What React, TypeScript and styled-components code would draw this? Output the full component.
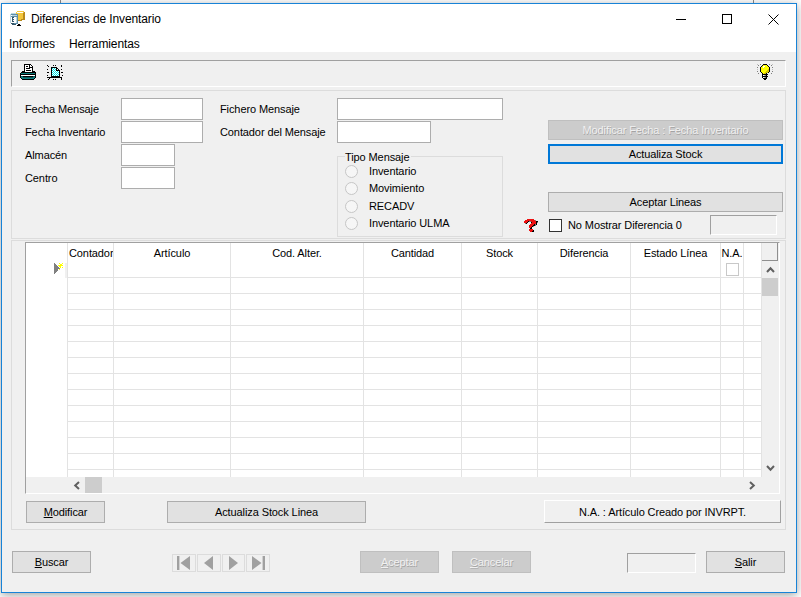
import { createGlobalStyle, styled } from 'styled-components';

const GlobalStyle = createGlobalStyle`
  html, body {
    margin: 0;
    padding: 0;
    height: 100%;
    overflow: hidden;
    background: #ffffff;
  }
  * {
    box-sizing: border-box;
  }
  body {
    font-family: 'Liberation Sans', Arial, sans-serif;
    font-size: 11px;
    letter-spacing: -0.1px;
    color: #000000;
  }
`;

const Backdrop = styled.div`
  width: 801px;
  height: 597px;
  padding: 3px 0 0 1px;
  background-image: linear-gradient(#8c8c8c, #8c8c8c), linear-gradient(#8c8c8c, #8c8c8c);
  background-size: 1px 3px;
  background-position: 60px 0, 753px 0;
  background-repeat: no-repeat;
`;

const Window = styled.div`
  width: 796px;
  height: 590px;
  display: flex;
  flex-direction: column;
  background: #f0f0f0;
  border: 1px solid #1883d7;
  box-shadow: 0 2px 9px rgba(0, 0, 0, 0.38);
`;

const TitleBar = styled.div`
  height: 30px;
  flex: none;
  display: flex;
  align-items: center;
  padding-left: 8px;
  background: #ffffff;
`;

const Title = styled.span`
  margin-left: 5px;
  flex: 1;
  font-size: 12px;
  letter-spacing: -0.12px;
`;

const WindowButton = styled.div`
  width: 46px;
  height: 30px;
  display: flex;
  align-items: center;
  justify-content: center;
`;

const MenuBar = styled.div`
  height: 18px;
  flex: none;
  display: flex;
  gap: 14px;
  align-items: center;
  padding: 2px 0 0 7px;
  font-size: 12px;
  background: #ffffff;
`;

const Content = styled.div`
  flex: 1;
  display: flex;
  flex-direction: column;
  padding: 8px 10px 0 9px;
`;

const Toolbar = styled.div`
  height: 27px;
  flex: none;
  display: flex;
  align-items: center;
  gap: 11px;
  padding: 0 12px 3px 8px;
  border-top: 1px solid #a0a0a0;
  border-left: 1px solid #a0a0a0;
  border-bottom: 1px solid #ffffff;
  border-right: 1px solid #ffffff;
`;

const ToolbarEnd = styled.div`
  margin-left: auto;
  display: flex;
`;

const FormPanel = styled.div`
  height: 149px;
  flex: none;
  margin-top: 3px;
  display: flex;
  padding: 7px 0 0 13px;
  border: 1px solid #dcdcdc;
`;

const FieldColumn = styled.div<{ $width: number }>`
  width: ${(p) => p.$width}px;
  flex: none;
  display: flex;
  flex-direction: column;
  gap: 1px;
`;

const Field = styled.div`
  height: 22px;
  flex: none;
  display: flex;
  align-items: center;
`;

const FieldLabel = styled.label<{ $width: number }>`
  width: ${(p) => p.$width}px;
  flex: none;
`;

const TextBox = styled.div<{ $width: number }>`
  width: ${(p) => p.$width}px;
  height: 22px;
  background: #ffffff;
  border: 1px solid #adadad;
`;

const TipoMensaje = styled.fieldset`
  width: 166px;
  height: 88px;
  margin: 5px 0 0 117px;
  padding: 0 0 0 7px;
  border: 1px solid #dcdcdc;
`;

const Legend = styled.legend`
  padding: 2px 2px 0 0;
  margin-bottom: -1.5px;
  line-height: 13px;
`;

const RadioRow = styled.div`
  height: 17.3px;
  display: flex;
  align-items: center;
  gap: 11px;
`;

const Radio = styled.span`
  width: 13px;
  height: 13px;
  margin-top: 1px;
  border: 1px solid #c6c6c6;
  border-radius: 50%;
  background: #f6f6f6;
`;

const ActionColumn = styled.div`
  width: 259px;
  flex: none;
  display: flex;
  flex-direction: column;
  padding: 22px 0 0 24px;
`;

const Button = styled.div<{ $width?: number; $height?: number; $top?: number }>`
  width: ${(p) => (p.$width ? `${p.$width}px` : '100%')};
  height: ${(p) => p.$height ?? 22}px;
  margin-top: ${(p) => p.$top ?? 0}px;
  flex: none;
  display: flex;
  align-items: center;
  justify-content: center;
  background: #e1e1e1;
  border: 1px solid #adadad;
`;

const FocusButton = styled(Button)`
  border: 2px solid #0078d7;
`;

const DisabledButton = styled(Button)`
  background: #cccccc;
  border-color: #bfbfbf;
  color: #f1f1f1;
  text-shadow: 0.6px 0.6px 0 #a3a3a3;
`;

const RaisedButton = styled(Button)`
  background: #f0f0f0;
  border-color: #ffffff #a0a0a0 #a0a0a0 #ffffff;
`;

const CheckRow = styled.div`
  height: 20px;
  margin: 3px 6px 0 -24px;
  display: flex;
  align-items: center;
`;

const Checkbox = styled.span`
  width: 13px;
  height: 13px;
  margin: 1px 6px 0 10px;
  background: #ffffff;
  border: 1px solid #333333;
`;

const Readout = styled.div<{ $width: number }>`
  width: ${(p) => p.$width}px;
  height: 20px;
  flex: none;
  border-top: 1px solid #a0a0a0;
  border-left: 1px solid #a0a0a0;
  border-bottom: 1px solid #ffffff;
  border-right: 1px solid #ffffff;
`;

const GridPanel = styled.div`
  height: 290px;
  flex: none;
  margin-top: 1px;
  padding: 1px 0 0 13px;
  border: 1px solid #dcdcdc;
`;

const GridBox = styled.div`
  width: 755px;
  height: 252px;
  display: grid;
  grid-template-columns: 736px 1fr;
  grid-template-rows: 234px 1fr;
  border-top: 1px solid #a0a0a0;
  border-left: 1px solid #a0a0a0;
  border-bottom: 1px solid #ffffff;
  border-right: 1px solid #ffffff;
`;

const Table = styled.div`
  overflow: hidden;
  display: grid;
  grid-template-columns: 42px 46px 117px 133px 98px 76px 93px 90px 23px 18px;
  grid-auto-rows: 16px;
  grid-template-rows: 35px;
  background: #ffffff;
`;

const Corner = styled.div`
  display: flex;
  align-items: flex-end;
  justify-content: flex-end;
  border-right: 1px solid #e3e3e3;
`;

const RowMark = styled.div`
  height: 15px;
  display: flex;
  align-items: flex-start;
  padding-right: 2px;
  border-right: 2px solid #f0f0f0;
`;

const RowHead = styled.div`
  border-right: 1px solid #e3e3e3;
`;

const HeadCell = styled.div<{ $left?: boolean }>`
  display: flex;
  flex-direction: column;
  align-items: ${(p) => (p.$left ? 'flex-start' : 'center')};
  padding: 3px 0 0 ${(p) => (p.$left ? 1 : 0)}px;
  white-space: nowrap;
  overflow: hidden;
  line-height: 14px;
  border-right: 1px solid #e3e3e3;
  border-bottom: 1px solid #e3e3e3;
`;

const HeadCheck = styled.span`
  width: 13px;
  height: 13px;
  margin-top: 3px;
  background: #ffffff;
  border: 1px solid #c8c8c8;
`;

const Cell = styled.div`
  border-right: 1px solid #e3e3e3;
  border-bottom: 1px solid #e3e3e3;
`;

const VScroll = styled.div`
  width: 16px;
  display: flex;
  flex-direction: column;
  background: #f0f0f0;
`;

const ScrollCorner = styled.div`
  height: 18px;
  flex: none;
  border-right: 1px solid #8f8f8f;
  border-bottom: 1px solid #8f8f8f;
`;

const ArrowButton = styled.div`
  width: 16px;
  height: 17px;
  flex: none;
  display: flex;
  align-items: center;
  justify-content: center;
`;

const VThumb = styled.div`
  height: 18px;
  flex: none;
  background: #cdcdcd;
`;

const Spring = styled.div`
  flex: 1;
`;

const HScroll = styled.div`
  grid-column: 1 / 3;
  height: 16px;
  display: flex;
  padding: 0 18px 0 42px;
  background: #f0f0f0;
`;

const HThumb = styled.div`
  width: 17px;
  flex: none;
  background: #cdcdcd;
`;

const HArrow = styled(ArrowButton)`
  height: 16px;
  width: 17px;
`;

const GridActions = styled.div`
  display: flex;
  margin-top: 7px;
  padding-left: 1px;
`;

const Footer = styled.div`
  display: flex;
  align-items: flex-end;
  height: 23px;
  margin-top: 20px;
  padding-left: 1px;
`;

const Pager = styled.div`
  width: 98px;
  height: 18px;
  flex: none;
  margin: 0 0 1px 81px;
  display: grid;
  grid-template-columns: repeat(4, 1fr);
  gap: 1px;
`;

const PagerButton = styled.div`
  display: flex;
  align-items: center;
  justify-content: center;
  border: 1px solid #dcdcdc;
`;

const Mnemonic = styled.span`
  text-decoration: underline;
`;

const Spacer = styled.div<{ $width: number }>`
  width: ${(p) => p.$width}px;
  flex: none;
`;

type Palette = Record<string, string>;

const COLORS: Palette = {
  k: '#000000',
  w: '#ffffff',
  t: '#0f7f7f',
  d: '#075a5a',
  g: '#808080',
  s: '#c0c0c0',
  y: '#ffff00',
  o: '#d6c400',
  c: '#00e5e5',
  r: '#ee1111',
  m: '#8a0000',
  f: '#f3c63c',
  h: '#b98a1c',
  b: '#5f8fa8',
  l: '#b9d6e2',
  n: '#34566b',
};

// small bitmap icons, one char per pixel
function PixelIcon({ rows }: { rows: string[] }) {
  const width = rows[0].length;
  return (
    <svg width={width} height={rows.length} viewBox={`0 0 ${width} ${rows.length}`} shapeRendering="crispEdges">
      {rows.map((row, y) =>
        row.split('').map((ch, x) =>
          COLORS[ch] ? <rect key={`${x}-${y}`} x={x} y={y} width={1} height={1} fill={COLORS[ch]} /> : null,
        ),
      )}
    </svg>
  );
}

const APP_ICON = [
  '.......fffffff..',
  '......fwwwwwwfh.',
  '.lllllfffffffhh.',
  'lbbbbbbbfffffhh.',
  'lwlllllbfffffhh.',
  'lbbbbbbbfffffhh.',
  'lwnnwwlbfffffhh.',
  'lwnwwwlbfffffhh.',
  'lwnnwwlbfffhhhh.',
  'lwnwwwlbhhhh....',
  'lwnnwwlb........',
  'lwwwwwlb........',
  '.nnnbbbb........',
  '..nnnn..kk......',
  '.......kkkk.....',
  '................',
];

const PRINTER_ICON = [
  '....kkkkkkk.....',
  '....kwwwwkwk....',
  '....kwkkwkwwk...',
  '....kwwwwkkkk...',
  '....kwkkkkwwk...',
  '....kwwwwwwwk...',
  '....kwkkkkkwk...',
  '..kkkwwwwwwwkkk.',
  '.kkkkkkkkkkkkkkk',
  'kttttttttttttttk',
  'kkkkkkkkkkkkkkkk',
  'kwwwwwwwwwwwwwwk',
  'kddkkkkkkkkkkddk',
  'kttddddddddddttk',
  '.kttttttttttttk.',
  '..kkkkkkkkkkkk..',
];

const PAGE_ICON = [
  'k.....k.k.....k.',
  '.k............k.',
  '....kkkkkk......',
  '....kcwcwkk.....',
  'k...kwcwckwk..k.',
  '....kcwcwkkkk...',
  '....kwcwcwcwk...',
  'kk..kcwcwcwck.kk',
  '....kwcwcwcwk...',
  '....kcwcwcwck...',
  'k...kwcwcwcwk..k',
  '....kkkkkkkkk...',
  'kkkkkkkkkkkkkkk.',
  '..k...........k.',
  '.k....k.k.....k.',
];

const BULB_ICON = [
  's..g..kkkk..g..s',
  '.g...kyyyyk...g.',
  '....kywwyyyk....',
  'g..kyywyyyyyk..g',
  '...kyyyyyyyyk...',
  's..kyyyyyyyok..s',
  '...kyyyyyyook...',
  'g..kyyyyyoook..g',
  '....kyyyoook....',
  '.g...kyook....g.',
  '.....kkkkkk.....',
  '.....kwsgk......',
  '.....kkkkkk.....',
  '.....kwsgk......',
  '......kkkk......',
  '.......kk.......',
];

const HELP_ICON = [
  '...rrrrrrr.....',
  '.rrrrrrrrrrg...',
  'rrrrkggrrrrrkk.',
  'rrrk...krrrrkg.',
  '.gk....rrrrrk..',
  '......rrrrkgk..',
  '.....rrrrkkg...',
  '.....rrrkg.....',
  '.....rrk.......',
  '......kk.......',
  '.....rrrr......',
  '.....rrrrk.....',
  '......rrkk.....',
];

const MARKER_ICON = [
  'g....y..y',
  'gg....yy.',
  'ggg.yyyyy',
  'gggg.yy..',
  'ggggg.y.y',
  'gggggg...',
  'gggg.y...',
  'gggg.....',
  'ggg......',
  'gg.......',
  'g........',
];

function ChevronIcon({ direction }: { direction: 'up' | 'down' | 'left' | 'right' }) {
  const rotate = { up: 0, right: 90, down: 180, left: 270 }[direction];
  return (
    <svg width="9" height="9" viewBox="0 0 9 9" style={{ transform: `rotate(${rotate}deg)` }}>
      <path d="M1 7 L4.5 3.2 L8 7" fill="none" stroke="#606060" strokeWidth="2" />
    </svg>
  );
}

function PagerIcon({ kind }: { kind: 'first' | 'prev' | 'next' | 'last' }) {
  const paths = {
    first: 'M1 1h2.4v14H1z M14 1v14L4.5 8z',
    prev: 'M12 1v14L3 8z',
    next: 'M4 1v14l9-7z',
    last: 'M12.6 1H15v14h-2.4z M2 1v14l9.5-7z',
  };
  return (
    <svg width="16" height="16" viewBox="0 0 16 16">
      <path d={paths[kind]} fill="#a0a0a0" />
    </svg>
  );
}

const COLUMNS = ['Contador', 'Artículo', 'Cod. Alter.', 'Cantidad', 'Stock', 'Diferencia', 'Estado Línea', 'N.A.', ''];
const ROW_COUNT = 13;

function App() {
  return (
    <Backdrop>
      <GlobalStyle />
      <Window>
        <TitleBar>
          <PixelIcon rows={APP_ICON} />
          <Title>Diferencias de Inventario</Title>
          <WindowButton>
            <svg width="10" height="10" viewBox="0 0 10 10" shapeRendering="crispEdges">
              <path d="M0 5.5h10" stroke="#000" />
            </svg>
          </WindowButton>
          <WindowButton>
            <svg width="10" height="10" viewBox="0 0 10 10" shapeRendering="crispEdges">
              <rect x="0.5" y="0.5" width="9" height="9" fill="none" stroke="#000" />
            </svg>
          </WindowButton>
          <WindowButton>
            <svg width="11" height="11" viewBox="0 0 11 11">
              <path d="M0.5 0.5l10 10M10.5 0.5l-10 10" stroke="#000" strokeWidth="1" />
            </svg>
          </WindowButton>
        </TitleBar>
        <MenuBar>
          <span>Informes</span>
          <span>Herramientas</span>
        </MenuBar>
        <Content>
          <Toolbar>
            <PixelIcon rows={PRINTER_ICON} />
            <PixelIcon rows={PAGE_ICON} />
            <ToolbarEnd>
              <PixelIcon rows={BULB_ICON} />
            </ToolbarEnd>
          </Toolbar>

          <FormPanel>
            <FieldColumn $width={195}>
              <Field>
                <FieldLabel $width={96}>Fecha Mensaje</FieldLabel>
                <TextBox $width={82} />
              </Field>
              <Field>
                <FieldLabel $width={96}>Fecha Inventario</FieldLabel>
                <TextBox $width={82} />
              </Field>
              <Field>
                <FieldLabel $width={96}>Almacén</FieldLabel>
                <TextBox $width={54} />
              </Field>
              <Field>
                <FieldLabel $width={96}>Centro</FieldLabel>
                <TextBox $width={54} />
              </Field>
            </FieldColumn>
            <FieldColumn $width={304}>
              <Field>
                <FieldLabel $width={117}>Fichero Mensaje</FieldLabel>
                <TextBox $width={166} />
              </Field>
              <Field>
                <FieldLabel $width={117}>Contador del Mensaje</FieldLabel>
                <TextBox $width={94} />
              </Field>
              <TipoMensaje>
                <Legend>Tipo Mensaje</Legend>
                <RadioRow>
                  <Radio />
                  Inventario
                </RadioRow>
                <RadioRow>
                  <Radio />
                  Movimiento
                </RadioRow>
                <RadioRow>
                  <Radio />
                  RECADV
                </RadioRow>
                <RadioRow>
                  <Radio />
                  Inventario ULMA
                </RadioRow>
              </TipoMensaje>
            </FieldColumn>
            <ActionColumn>
              <DisabledButton $height={20}>Modificar Fecha : Fecha Inventario</DisabledButton>
              <FocusButton $height={20} $top={4}>
                Actualiza Stock
              </FocusButton>
              <Button $height={20} $top={28}>
                Aceptar Lineas
              </Button>
              <CheckRow>
                <PixelIcon rows={HELP_ICON} />
                <Checkbox />
                No Mostrar Diferencia 0
                <Spring />
                <Readout $width={67} />
              </CheckRow>
            </ActionColumn>
          </FormPanel>

          <GridPanel>
            <GridBox>
              <Table>
                <Corner>
                  <RowMark>
                    <PixelIcon rows={MARKER_ICON} />
                  </RowMark>
                </Corner>
                {COLUMNS.map((name, i) => (
                  <HeadCell key={i} $left={i === 0}>
                    {name}
                    {name === 'N.A.' && <HeadCheck />}
                  </HeadCell>
                ))}
                {Array.from({ length: ROW_COUNT }).map((_, row) => [
                  <RowHead key={`h${row}`} />,
                  ...COLUMNS.map((_, col) => <Cell key={`${row}-${col}`} />),
                ])}
              </Table>
              <VScroll>
                <ScrollCorner />
                <ArrowButton>
                  <ChevronIcon direction="up" />
                </ArrowButton>
                <VThumb />
                <Spring />
                <ArrowButton>
                  <ChevronIcon direction="down" />
                </ArrowButton>
              </VScroll>
              <HScroll>
                <HArrow>
                  <ChevronIcon direction="left" />
                </HArrow>
                <HThumb />
                <Spring />
                <HArrow>
                  <ChevronIcon direction="right" />
                </HArrow>
              </HScroll>
            </GridBox>
            <GridActions>
              <Button $width={79}>
                <span>
                  <Mnemonic>M</Mnemonic>odificar
                </span>
              </Button>
              <Spacer $width={62} />
              <Button $width={199}>Actualiza Stock Linea</Button>
              <Spacer $width={178} />
              <RaisedButton $width={237} $height={23} $top={-1}>
                N.A. : Artículo Creado por INVRPT.
              </RaisedButton>
            </GridActions>
          </GridPanel>

          <Footer>
            <Button $width={79}>
              <span>
                <Mnemonic>B</Mnemonic>uscar
              </span>
            </Button>
            <Pager>
              <PagerButton>
                <PagerIcon kind="first" />
              </PagerButton>
              <PagerButton>
                <PagerIcon kind="prev" />
              </PagerButton>
              <PagerButton>
                <PagerIcon kind="next" />
              </PagerButton>
              <PagerButton>
                <PagerIcon kind="last" />
              </PagerButton>
            </Pager>
            <Spacer $width={90} />
            <DisabledButton $width={79}>
              <span>
                <Mnemonic>A</Mnemonic>ceptar
              </span>
            </DisabledButton>
            <Spacer $width={13} />
            <DisabledButton $width={79}>
              <span>
                <Mnemonic>C</Mnemonic>ancelar
              </span>
            </DisabledButton>
            <Spacer $width={96} />
            <Readout $width={69} />
            <Spacer $width={10} />
            <Button $width={79}>
              <span>
                <Mnemonic>S</Mnemonic>alir
              </span>
            </Button>
          </Footer>
        </Content>
      </Window>
    </Backdrop>
  );
}

export default App;
